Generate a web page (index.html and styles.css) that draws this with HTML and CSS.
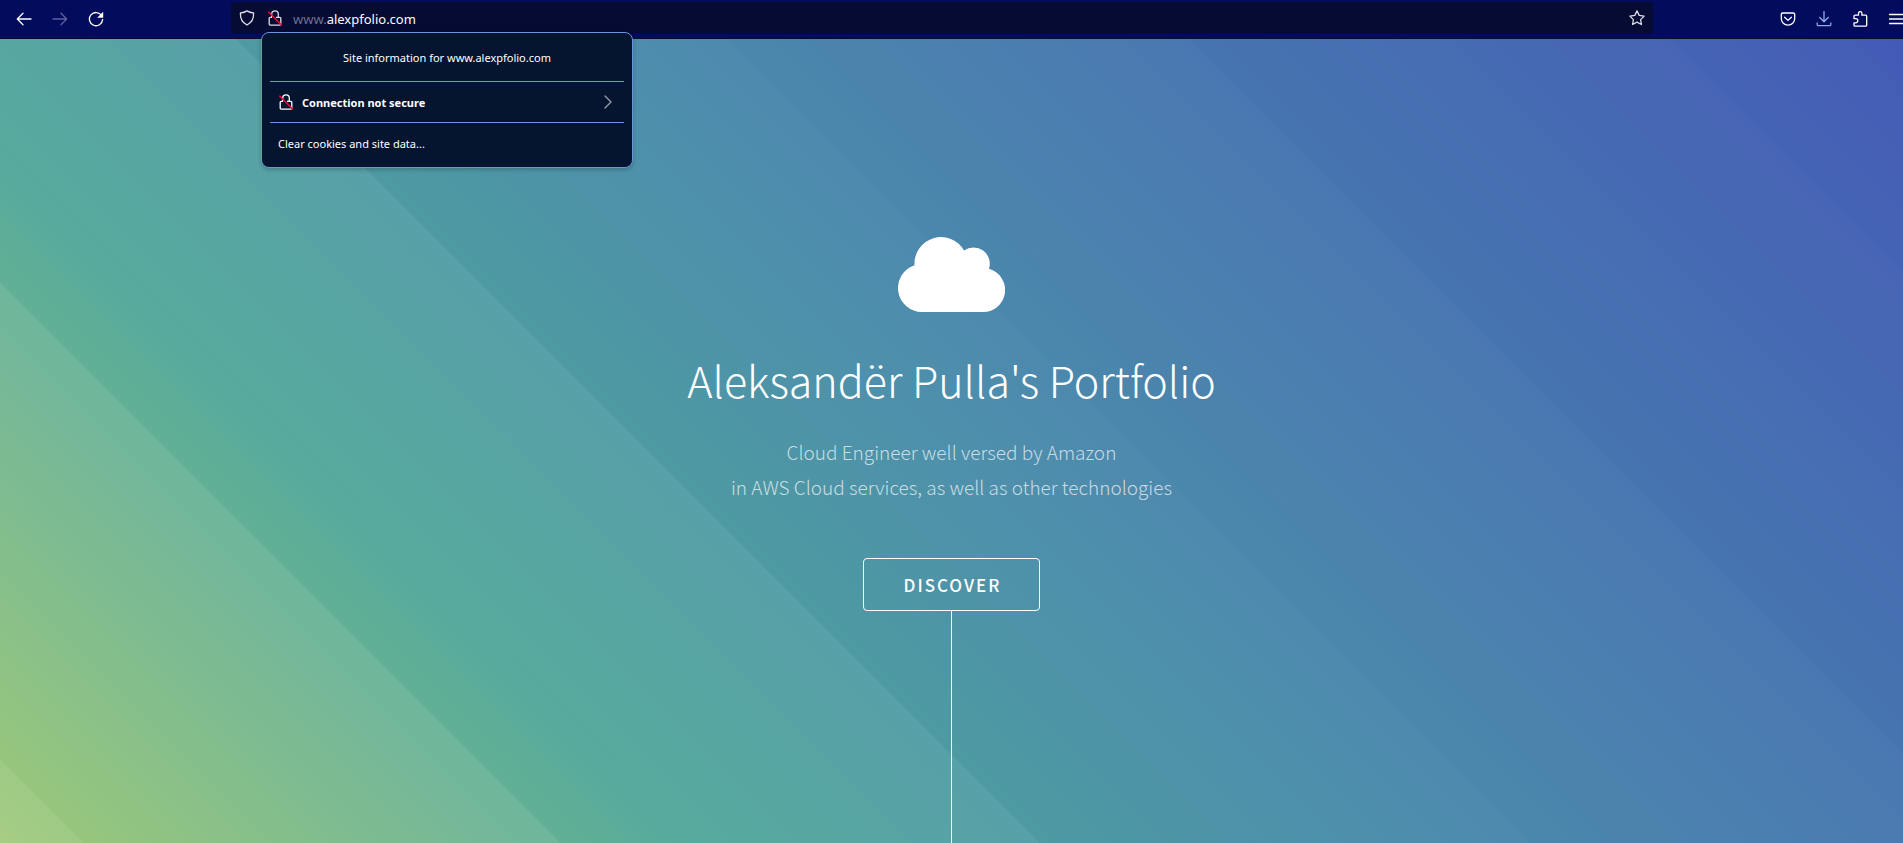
FILE: index.html
```html
<!DOCTYPE html>
<html lang="en">
<head>
<meta charset="utf-8">
<meta name="viewport" content="width=device-width, initial-scale=1">
<title>Aleksandër Pulla's Portfolio</title>
<link rel="stylesheet" href="styles.css">
</head>
<body>
<svg width="0" height="0" class="defs" aria-hidden="true">
  <symbol id="insecure" viewBox="0 0 16 16">
    <g fill="none" stroke="currentColor" stroke-width="1.3" stroke-linejoin="round">
      <path d="M4.700 7.300V4.100a3.300 3.300 0 0 1 6.600 0v3.200"/>
      <path d="M5 7.300H3.200a1 1 0 0 0-1 1v5.800a1 1 0 0 0 1 1h9.600a1 1 0 0 0 1-1V8.300a1 1 0 0 0-1-1H9"/>
    </g>
    <path class="slash" d="M1.300 1.800l13.500 13.400"/>
  </symbol>
</svg>

<header class="toolbar">
  <nav class="nav" aria-label="Navigation">
    <button class="tool" aria-label="Back"><svg viewBox="0 0 16 16"><path d="M15 8H1.5M7 2.3L1.3 8 7 13.7"/></svg></button>
    <button class="tool tool-dim" aria-label="Forward"><svg viewBox="0 0 16 16"><path d="M1 8h13.5M9 2.3L14.7 8 9 13.7"/></svg></button>
    <button class="tool" aria-label="Reload"><svg viewBox="0 0 16 16"><path d="M13.600 4.600A6.600 6.600 0 1 0 14.600 8.600"/><path class="solid" d="M15.200 .800v6H9.200z"/></svg></button>
  </nav>

  <div class="urlbar">
    <button class="tool tool-soft" aria-label="Tracking protection"><svg viewBox="0 0 16 16"><path d="M8 .9c1.700 1.200 4 1.900 6.600 2.100.3 5.600-2 9.700-6.600 12C3.400 12.700 1.100 8.600 1.400 3 4 2.800 6.300 2.100 8 .9z"/></svg></button>
    <div class="identity">
      <button class="tool tool-soft" aria-label="Site information"><svg><use href="#insecure"/></svg></button>
      <section class="popup" aria-label="Site information">
        <h2 class="popup-title">Site information for www.alexpfolio.com</h2>
        <button class="popup-row popup-security">
          <svg class="icon"><use href="#insecure"/></svg>
          <span>Connection not secure</span>
          <svg class="chevron" viewBox="0 0 8 14"><path d="M1 1l6 6-6 6"/></svg>
        </button>
        <button class="popup-row">Clear cookies and site data...</button>
      </section>
    </div>
    <label class="address"><span class="prefix">www.</span><input class="address-input" type="text" value="alexpfolio.com" aria-label="Address"></label>
    <button class="tool tool-soft" aria-label="Bookmark"><svg viewBox="0 0 16 16"><path d="M8 .9l2.200 4.500 4.900.7-3.500 3.500.8 4.900L8 12.200l-4.400 2.300.8-4.900L.9 6.100l4.900-.7z"/></svg></button>
  </div>

  <div class="actions">
    <button class="tool" aria-label="Save to Pocket"><svg viewBox="0 0 16 16"><path d="M2.500 2h11a1.200 1.200 0 0 1 1.200 1.200V7.500a6.700 6.700 0 0 1-13.400 0V3.200A1.200 1.200 0 0 1 2.500 2zM4.600 6.200L8 9.400l3.400-3.200"/></svg></button>
    <button class="tool tool-blue" aria-label="Downloads"><svg viewBox="0 0 16 16"><path d="M8 .5v10M3.800 6.500L8 10.700l4.200-4.200M1.200 12v1.500a1.200 1.200 0 0 0 1.200 1.200h11.200a1.200 1.200 0 0 0 1.200-1.200V12"/></svg></button>
    <button class="tool" aria-label="Extensions"><svg viewBox="0 0 16 16"><path d="M2 7.600V5.200a1 1 0 0 1 1-1h3.500V2.300a1.700 1.700 0 0 1 3.400 0v1.900h3.800a1 1 0 0 1 1 1v9a1 1 0 0 1-1 1H3a1 1 0 0 1-1-1v-2.400h1.700a1.900 1.900 0 0 0 0-4.200z"/></svg></button>
    <button class="tool" aria-label="Menu"><svg viewBox="0 0 16 16"><path d="M1.500 3.500h13M1.500 8h13M1.500 12.500h13"/></svg></button>
  </div>
</header>

<main class="hero">
  <svg class="cloud" viewBox="0 0 107 75" aria-hidden="true">
    <path d="M24 75A24 24 0 0 1 16.500 28.200A26.500 26.500 0 0 1 66 13.500A16.300 16.300 0 0 1 91 31.800A22 22 0 0 1 85 75z"/>
  </svg>
  <h1 class="title">Aleksandër Pulla's Portfolio</h1>
  <p class="tagline">Cloud Engineer well versed by Amazon<br>in AWS Cloud services, as well as other technologies</p>
  <a class="discover" href="#one">Discover</a>
  <div class="stem"></div>
</main>
</body>
</html>
```
FILE: styles.css
```css
*, *::before, *::after { box-sizing: border-box; }

body {
  display: flex;
  flex-direction: column;
  min-height: 100vh;
  margin: 0;
  overflow-x: hidden;
  font-family: "Noto Sans", "Open Sans", sans-serif;
  color: #fff;
}

.defs { position: absolute; }

button {
  padding: 0;
  border: 0;
  background: none;
  color: inherit;
  font: inherit;
  cursor: pointer;
}

/* Browser toolbar */
.toolbar {
  display: flex;
  align-items: flex-start;
  height: 39px;
  padding-top: 2px;
  background: #030b5c;
  border-bottom: 1px solid #0a0a30;
}

.nav {
  display: flex;
  flex: 0 0 231px;
  gap: 4px;
  padding-left: 8px;
}

.tool {
  display: grid;
  flex: none;
  place-items: center;
  width: 32px;
  height: 33px;
}

.tool svg, .icon { width: 16px; height: 16px; }

.tool path, .chevron path {
  fill: none;
  stroke: currentColor;
  stroke-width: 1.3;
  stroke-linecap: round;
  stroke-linejoin: round;
}

.tool .solid { fill: currentColor; stroke: none; }
.defs .slash { fill: none; stroke: #f0093c; stroke-width: 1.5; }
.tool-dim { color: #5c619c; }
.tool-soft { color: #dcdde8; }
.tool-blue { color: #8fabec; }

.urlbar {
  display: flex;
  flex: 1;
  min-width: 0;
  height: 32px;
  border-radius: 4px;
  background: #060b33;
}

.urlbar .tool { height: 32px; }
.identity { position: relative; flex: none; }
.identity > .tool { width: 24px; }

.address {
  display: flex;
  flex: 1;
  align-items: center;
  min-width: 0;
  padding: 2px 0 0 6px;
  font-size: 13px;
}

.prefix { color: #6c6f94; }

.address-input {
  flex: 1;
  min-width: 0;
  padding: 0;
  border: 0;
  outline: 0;
  background: none;
  color: #fbfbfe;
  font: inherit;
}

.actions {
  display: flex;
  flex: 0 0 259px;
  justify-content: flex-end;
  gap: 4px;
  margin-right: -9px;
}

/* Site information popup */
.popup {
  position: absolute;
  top: 30px;
  left: -2px;
  z-index: 1;
  width: 372px;
  padding: 0 8px 4px;
  border: 1px solid #6a94e0;
  border-radius: 8px;
  background: #05142f;
  box-shadow: 0 2px 4px rgba(0, 0, 0, .2);
  font-size: 11px;
}

.popup-title {
  margin: 0;
  padding-top: 2px;
  line-height: 46px;
  font-size: 11px;
  font-weight: 400;
  text-align: center;
}

.popup-row {
  display: flex;
  align-items: center;
  gap: 8px;
  width: 100%;
  height: 41px;
  padding: 0 12px 0 8px;
  border-top: 1px solid #6a94e0;
}

.popup-security { font-weight: 700; }

.chevron {
  width: 8px;
  height: 14px;
  margin-left: auto;
  color: #9aa0b0;
}

/* Landing section: diagonal colour ramp with stepped white bands */
.hero {
  display: flex;
  flex: 1;
  flex-direction: column;
  align-items: center;
  padding-top: 198px;
  background:
    linear-gradient(45deg, rgba(255, 255, 255, .08) 3.1%, transparent 3.1%),
    linear-gradient(45deg, rgba(255, 255, 255, .03) 3.1%, rgba(255, 255, 255, .08) 20.7%, transparent 20.7%),
    linear-gradient(45deg, rgba(255, 255, 255, .03) 20.7%, rgba(255, 255, 255, .06) 38.4%, transparent 38.4%),
    linear-gradient(45deg, transparent 40%, rgba(255, 255, 255, .01) 56.5%, transparent 56.5%),
    linear-gradient(45deg, transparent 58%, rgba(255, 255, 255, .025) 73.6%, transparent 73.6%),
    linear-gradient(45deg, transparent 75%, rgba(255, 255, 255, .01) 91.4%, transparent 91.4%),
    linear-gradient(45deg, #99c670 0%, #4fa799 25.6%, #4d8fab 50%, #4673b0 75%, #445bb6 100%);
  font-family: "Noto Sans CJK JP", "Noto Sans", sans-serif;
  font-weight: 300;
  text-align: center;
}

.cloud { width: 107px; height: 75px; fill: #fff; }

.title {
  margin: 33px 0 0;
  font-size: 43px;
  font-weight: 300;
  line-height: 68px;
}

.tagline {
  margin: 21px 0 0;
  color: rgba(255, 255, 255, .7);
  font-size: 19px;
  line-height: 35px;
}

.discover {
  margin-top: 54px;
  padding: 0 38px 0 40px;
  border: 1px solid #fff;
  border-radius: 4px;
  color: #fff;
  font-size: 17px;
  font-weight: 500;
  letter-spacing: 2px;
  line-height: 51px;
  text-decoration: none;
  text-transform: uppercase;
}

.stem {
  flex: 1;
  width: 1px;
  min-height: 96px;
  background: #fff;
}
```
